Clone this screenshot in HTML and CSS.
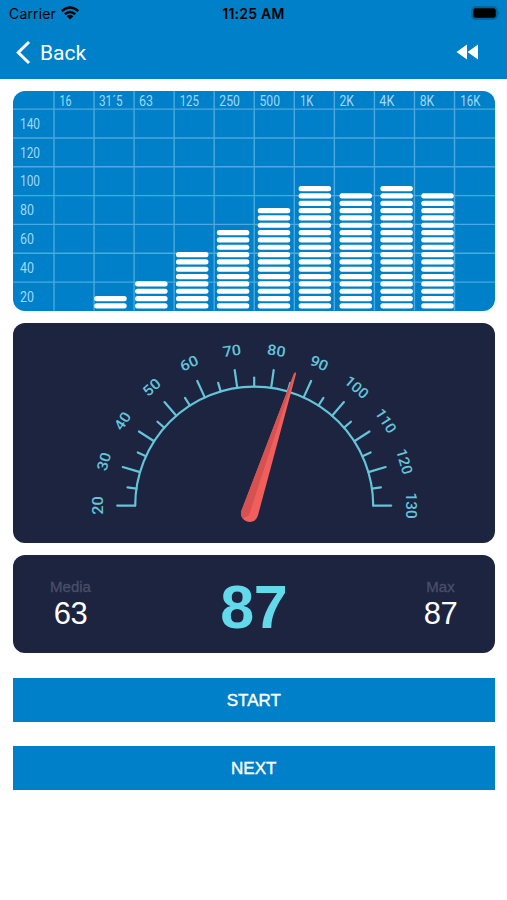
FILE: index.html
```html
<!DOCTYPE html>
<html lang="en">
<head>
<meta charset="utf-8">
<title>Sound meter</title>
<link rel="stylesheet" href="styles.css">
</head>
<body>
<header class="header">
  <div class="status">
    <div class="carrier"><span class="carrier-name">Carrier</span>
      <svg class="wifi" width="20" height="16" viewBox="0 0 20 16"><g fill="none" stroke="#000" stroke-width="2.5"><path d="M1.8 6.1Q10-1.1 18.200 6.100"/><path d="M4.800 9.200Q10 4.700 15.200 9.200"/></g><path d="M6.700 11.200Q10 8.500 13.300 11.200L10 14.600Z"/></svg>
    </div>
    <div class="clock">11:25 AM</div>
    <svg class="battery" width="30" height="14" viewBox="0 0 30 14"><rect x=".7" y=".7" width="25.600" height="12.600" rx="4" fill="#006298" stroke="#00669e" stroke-width="1.200"/><rect x="2.300" y="2.300" width="22.400" height="9.400" rx="2.500"/><path d="M27.500 5.300q1.700 1.700 0 3.400z" fill="#005684"/></svg>
  </div>
  <nav class="nav">
    <a class="back"><svg width="16" height="26" viewBox="0 0 16 26"><path d="M14 2L3.300 12.500L14 23" fill="none" stroke="#fff" stroke-width="3"/></svg><span>Back</span></a>
    <svg class="rewind" width="23" height="16" viewBox="0 0 23 16"><path d="M11 .6V15.400L.5 8ZM22 .6V15.400L11.500 8Z" fill="#fff"/></svg>
  </nav>
</header>
<main class="content">
  <section class="card chart"><svg id="chart" width="482" height="220" viewBox="13 91.4 482 220"></svg></section>
  <section class="card gauge"><svg id="gauge" width="482" height="220" viewBox="13 323.4 482 220"></svg></section>
  <section class="card stats">
    <div class="stat"><span class="label">Media</span><span class="value">63</span></div>
    <div class="current">87</div>
    <div class="stat"><span class="label">Max</span><span class="value">87</span></div>
  </section>
  <button class="button">START</button>
  <button class="button">NEXT</button>
</main>
<script src="meter.js"></script>
</body>
</html>
```
FILE: styles.css
```css
* { box-sizing: border-box; }
body { margin: 0; background: #fff; font-family: "Liberation Sans", sans-serif; }
svg { display: block; flex: none; }
.header { height: 79px; background: #0080c9; }
.status { height: 27px; display: grid; grid-template-columns: 1fr auto 1fr; padding: 0 6px 0 9px; align-items: center; color: #000; font-family: Inter, sans-serif; }
.carrier { display: flex; align-items: center; gap: 4px; font-size: 14px; letter-spacing: .15px; }
.wifi { margin-top: -2px; }
.clock { font-size: 14px; font-weight: 600; padding-right: 3px; letter-spacing: .25px; }
.battery { justify-self: end; margin-top: -1px; }
.nav { height: 51px; display: flex; align-items: center; justify-content: space-between; padding: 0 28px 0 15px; }
.rewind { margin-top: -2px; }
.back { display: flex; align-items: center; gap: 9px; color: #fff; font: 21px Roboto, sans-serif; }
.content { padding: 12.4px 12.5px 0 13px; display: flex; flex-direction: column; }
.card { border-radius: 12px; overflow: hidden; flex: none; }
.chart { height: 219.6px; background: #0080c9; }
.gauge { height: 220px; margin-top: 12.4px; background: #1d2440; }
.stats { height: 98px; margin-top: 12px; background: #1d2440; display: grid; grid-template-columns: 115px 1fr 108px; align-items: center; }
.stat { display: flex; flex-direction: column; align-items: center; padding-top: 2px; }
.label { font-size: 15px; line-height: 18px; color: #4a4f68; -webkit-text-stroke: .3px #4a4f68; }
.value { font-size: 31px; line-height: 36px; color: #fff; letter-spacing: -.5px; }
.current { text-align: center; color: #63d9ec; font-weight: 700; font-size: 61px; line-height: 70px; padding: 5px 7px 0 0; letter-spacing: -.5px; }
.button { height: 44px; margin-top: 24.4px; flex: none; border: 0; padding: 2px 0 0; background: #0080c9; color: #fff; font: 17px "Liberation Sans", sans-serif; -webkit-text-stroke: .4px #fff; }
.axis { fill: #a0d8f5; font: 15.2px Roboto, sans-serif; }
.grid { stroke: #4aa9df; stroke-width: 1.4; }
.bar { fill: #fff; }
.scale { fill: none; stroke: #63c4da; stroke-width: 2.2; stroke-linecap: round; }
.mark { fill: #63c4da; font: 500 14.5px Roboto, sans-serif; text-anchor: middle; }
```
FILE: meter.js
```js
const NS = 'http://www.w3.org/2000/svg';
function add(parent, tag, attrs, text) {
  const el = document.createElementNS(NS, tag);
  for (const k in attrs) el.setAttribute(k, attrs[k]);
  if (text) el.textContent = text;
  parent.appendChild(el);
  return el;
}

// Octave band levels
const chart = document.getElementById('chart');
for (let i = 0; i < 11; i++) add(chart, 'line', {class: 'grid', x1: 54 + i * 40.05, x2: 54 + i * 40.05, y1: 91, y2: 311});
for (let i = 0; i < 7; i++) add(chart, 'line', {class: 'grid', x1: 13, x2: 495, y1: 109.5 + i * 28.83, y2: 109.5 + i * 28.83});
const bands = [['16', 59.5, 12], ['31´5', 99, 23.5], ['63', 139, 14], ['125', 179.7, 19.3], ['250', 219.3, 20.5], ['500', 259.5, 20.5], ['1K', 300, 13.5], ['2K', 339.5, 14.5], ['4K', 379.3, 15], ['8K', 419.7, 14.5], ['16K', 460.3, 20]];
for (const [t, x, w] of bands) add(chart, 'text', {class: 'axis', x, y: 106.4, textLength: w, lengthAdjust: 'spacingAndGlyphs'}, t);
for (let i = 0; i < 7; i++) {
  const t = String(140 - i * 20);
  add(chart, 'text', {class: 'axis', x: 20, y: 129.2 + i * 28.83, textLength: t.length > 2 ? 20 : 14, lengthAdjust: 'spacingAndGlyphs'}, t);
}
[2, 4, 8, 11, 14, 17, 16, 17, 16].forEach((n, b) => {
  for (let i = 0; i < n; i++) add(chart, 'rect', {class: 'bar', x: 94.2 + b * 40.88, y: 303.7 - i * 7.33, width: 32.5, height: 5.2, rx: 2.5});
});

// Dial
const gauge = document.getElementById('gauge'), cx = 254.2, cy = 506;
add(gauge, 'path', {class: 'scale', d: 'M135.2 506A119 119 0 0 1 373.2 506'});
for (let i = 0; i <= 22; i++) {
  const deg = -90 + i * 90 / 11, major = i % 2 === 0;
  add(gauge, 'line', {class: 'scale', x1: cx, x2: cx, y1: cy - 119, y2: cy - (major ? 137 : 128), transform: `rotate(${deg} ${cx} ${cy})`});
  if (major) {
    const t = String(20 + i * 5);
    add(gauge, 'text', {class: 'mark', x: cx, y: cy - 151.5, textLength: t.length > 2 ? 26 : 18.5, lengthAdjust: 'spacingAndGlyphs', transform: `rotate(${deg} ${cx} ${cy})`}, t);
  }
}
const needle = add(gauge, 'g', {transform: 'translate(249.6 513.8) rotate(18)'});
add(needle, 'path', {fill: '#f05f5c', d: 'M-8.6 0L-1-147Q0-150 1-147L8.6 0A8.6 8.6 0 0 1-8.6 0Z'});
add(needle, 'path', {fill: '#d6514f', d: 'M-8.6 0L-1-147L0-148V2L-5 6.9A8.6 8.6 0 0 1-8.6 0Z'});
```
